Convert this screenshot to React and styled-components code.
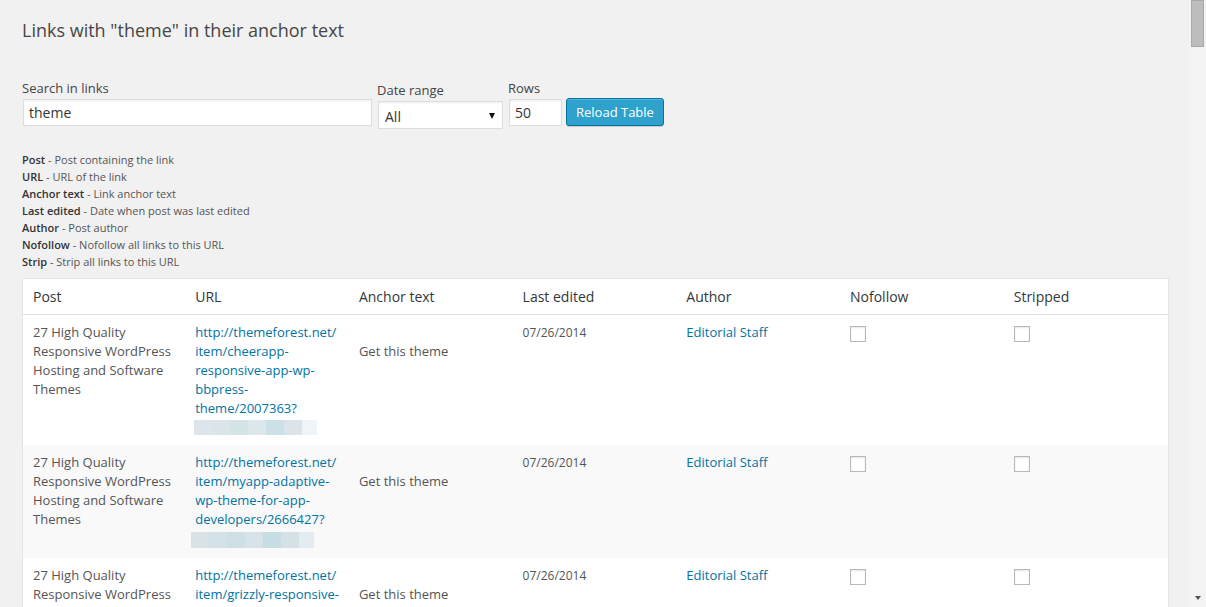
import React from "react";
import styled, { createGlobalStyle } from "styled-components";

const Global = createGlobalStyle`
  html, body { margin: 0; padding: 0; background: #f1f1f1; overflow: hidden; }
  body { font-family: "Open Sans", "Liberation Sans", sans-serif; color: #444; }
  * { box-sizing: border-box; }
`;

const Shell = styled.div`
  display: flex;
  width: 1206px;
  height: 607px;
  overflow: hidden;
`;

const Main = styled.main`
  flex: 1;
  min-width: 0;
  overflow: hidden;
  padding: 18px 20px 0 22px;
`;

const Title = styled.h2`
  margin: 0;
  font-size: 18px;
  line-height: 24px;
  font-weight: 400;
  color: #464646;
`;

const Form = styled.form`
  display: flex;
  align-items: flex-end;
  margin-top: 37px;
  height: 50px;
`;

const Field = styled.div`
  display: flex;
  flex-direction: column;
  margin-right: ${(p) => p.$mr || 0}px;
  margin-bottom: ${(p) => p.$mb || 0}px;
`;

const Label = styled.label`
  font-size: 13px;
  line-height: 18px;
  color: #444;
  margin-bottom: 2px;
`;

const TextInput = styled.input`
  width: ${(p) => p.$w}px;
  height: ${(p) => p.$h}px;
  margin-left: ${(p) => p.$ml || 0}px;
  border: 1px solid #ddd;
  background: #fff;
  box-shadow: inset 0 1px 2px rgba(0, 0, 0, 0.07);
  font-family: "Open Sans", "Liberation Sans", sans-serif;
  font-size: 14px;
  color: #333;
  padding: 0 5px;
  outline: none;
`;

const SelectWrap = styled.div`
  position: relative;
  width: 125px;
  height: 28px;
  margin-left: 1px;
`;

const Select = styled.select`
  appearance: none;
  -webkit-appearance: none;
  width: 100%;
  height: 100%;
  border: 1px solid #ddd;
  background: #fff;
  box-shadow: inset 0 1px 2px rgba(0, 0, 0, 0.07);
  font-family: "Open Sans", "Liberation Sans", sans-serif;
  font-size: 14px;
  color: #333;
  padding: 2px 6px 0;
  outline: none;
  border-radius: 0;
`;

const Arrow = styled.span`
  position: absolute;
  right: 8px;
  top: 12px;
  width: 0;
  height: 0;
  border-left: 3.5px solid transparent;
  border-right: 3.5px solid transparent;
  border-top: 6px solid #111;
  pointer-events: none;
`;

const Button = styled.button`
  height: 28px;
  margin-bottom: 3px;
  padding: 0 9px 1px;
  font-family: "Open Sans", "Liberation Sans", sans-serif;
  font-size: 13px;
  color: #fff;
  background: #2ea2cc;
  border: 1px solid #0074a2;
  border-radius: 3px;
  box-shadow: inset 0 1px 0 rgba(120, 200, 230, 0.5), 0 1px 0 rgba(0, 0, 0, 0.15);
  cursor: pointer;
`;

const Legend = styled.ul`
  list-style: none;
  margin: 22px 0 0;
  padding: 0;
  font-size: 11px;
  line-height: 17px;
  color: #555;
`;

const Term = styled.strong`
  font-weight: 600;
  color: #333;
`;

const Table = styled.table`
  margin-top: 8px;
  width: 1147px;
  border-collapse: collapse;
  table-layout: fixed;
  background: #fff;
  border: 1px solid #e5e5e5;
  box-shadow: 0 1px 1px rgba(0, 0, 0, 0.04);
`;

const Th = styled.th`
  text-align: left;
  font-weight: 400;
  font-size: 14px;
  line-height: 19px;
  color: #32373c;
  padding: 8px 10px 8px ${(p) => (p.$first ? 10 : 9)}px;
  border-bottom: 1px solid #e1e1e1;
`;

const Tr = styled.tr`
  background: ${(p) => (p.$alt ? "#f9f9f9" : "#fff")};
`;

const Td = styled.td`
  vertical-align: top;
  font-size: 13px;
  line-height: 19px;
  color: #555;
  padding: 8px 10px 10px ${(p) => (p.$first ? 10 : 9)}px;
`;

const Line = styled.span`
  display: block;
  white-space: nowrap;
`;

const Link = styled.a`
  color: #0074a2;
  text-decoration: none;
`;

const AnchorText = styled.span`
  display: block;
  margin-top: 19px;
`;

const DateText = styled.span`
  font-size: 12px;
`;

const Blur = styled.span`
  display: flex;
  height: ${(p) => p.$h}px;
  margin-top: ${(p) => p.$mt}px;
  margin-left: ${(p) => p.$ml}px;
`;

const Pixel = styled.span`
  width: ${(p) => p.$w}px;
  height: 100%;
  background: ${(p) => p.$c};
`;

const Check = styled.input.attrs({ type: "checkbox" })`
  appearance: none;
  -webkit-appearance: none;
  width: 16px;
  height: 16px;
  margin: 3px 0 0;
  border: 1px solid #b4b9be;
  background: #fff;
  box-shadow: inset 0 1px 2px rgba(0, 0, 0, 0.1);
  display: block;
`;

const Scrollbar = styled.div`
  width: 17px;
  height: 607px;
  background: #f3f3f3;
  display: flex;
  flex-direction: column;
  align-items: center;
  justify-content: space-between;
  padding-bottom: 7px;
`;

const Thumb = styled.div`
  width: 13px;
  height: 47px;
  background: #bdbdbd;
  border: 1px solid #a9a9a9;
  margin-left: 2px;
  align-self: flex-start;
`;

const DownArrow = styled.div`
  width: 0;
  height: 0;
  border-left: 3.5px solid transparent;
  border-right: 3.5px solid transparent;
  border-top: 4px solid #505050;
`;

const legend = [
  ["Post", "Post containing the link"],
  ["URL", "URL of the link"],
  ["Anchor text", "Link anchor text"],
  ["Last edited", "Date when post was last edited"],
  ["Author", "Post author"],
  ["Nofollow", "Nofollow all links to this URL"],
  ["Strip", "Strip all links to this URL"],
];

const heads = ["Post", "URL", "Anchor text", "Last edited", "Author", "Nofollow", "Stripped"];

const postLines = ["27 High Quality", "Responsive WordPress", "Hosting and Software", "Themes"];

const rows = [
  {
    url: [
      "http://themeforest.net/",
      "item/cheerapp-",
      "responsive-app-wp-",
      "bbpress-",
      "theme/2007363?",
    ],
    blur: {
      h: 15,
      mt: 2,
      ml: -1,
      px: [
        [18, "#dde5ec"],
        [18, "#dae5ea"],
        [18, "#d4e3e8"],
        [18, "#dde8ec"],
        [18, "#cbe0e7"],
        [18, "#dce4eb"],
        [15, "#eef4f8"],
      ],
    },
  },
  {
    url: [
      "http://themeforest.net/",
      "item/myapp-adaptive-",
      "wp-theme-for-app-",
      "developers/2666427?",
    ],
    blur: {
      h: 16,
      mt: 3,
      ml: -4,
      px: [
        [18, "#d8e2e7"],
        [18, "#d3e2e8"],
        [18, "#cfe0e5"],
        [18, "#d6e3e8"],
        [18, "#c6dde4"],
        [18, "#d4e1e7"],
        [15, "#e3edf1"],
      ],
    },
  },
  {
    url: [
      "http://themeforest.net/",
      "item/grizzly-responsive-",
      "wp-theme/1234567?",
    ],
    blur: null,
  },
];

export default function App() {
  return (
    <>
      <Global />
      <Shell>
        <Main>
          <Title>Links with "theme" in their anchor text</Title>
          <Form onSubmit={(e) => e.preventDefault()}>
            <Field $mr={5} $mb={3}>
              <Label>Search in links</Label>
              <TextInput $w={349} $h={27} $ml={1} defaultValue="theme" />
            </Field>
            <Field $mr={5}>
              <Label>Date range</Label>
              <SelectWrap>
                <Select defaultValue="all">
                  <option value="all">All</option>
                </Select>
                <Arrow />
              </SelectWrap>
            </Field>
            <Field $mr={4} $mb={3}>
              <Label>Rows</Label>
              <TextInput $w={53} $h={27} $ml={1} defaultValue="50" />
            </Field>
            <Button type="button">Reload Table</Button>
          </Form>
          <Legend>
            {legend.map(([t, d]) => (
              <li key={t}>
                <Term>{t}</Term> - {d}
              </li>
            ))}
          </Legend>
          <Table>
            <thead>
              <tr>
                {heads.map((h, k) => (
                  <Th key={h} $first={k === 0}>
                    {h}
                  </Th>
                ))}
              </tr>
            </thead>
            <tbody>
              {rows.map((r, i) => (
                <Tr key={i} $alt={i % 2 === 1}>
                  <Td $first>
                    {postLines.map((l) => (
                      <Line key={l}>{l}</Line>
                    ))}
                  </Td>
                  <Td>
                    <Link href="#">
                      {r.url.map((l) => (
                        <Line key={l}>{l}</Line>
                      ))}
                    </Link>
                    {r.blur && (
                      <Blur $h={r.blur.h} $mt={r.blur.mt} $ml={r.blur.ml}>
                        {r.blur.px.map(([w, c], k) => (
                          <Pixel key={k} $w={w} $c={c} />
                        ))}
                      </Blur>
                    )}
                  </Td>
                  <Td>
                    <AnchorText>Get this theme</AnchorText>
                  </Td>
                  <Td>
                    <DateText>07/26/2014</DateText>
                  </Td>
                  <Td>
                    <Link href="#">Editorial Staff</Link>
                  </Td>
                  <Td>
                    <Check />
                  </Td>
                  <Td>
                    <Check />
                  </Td>
                </Tr>
              ))}
            </tbody>
          </Table>
        </Main>
        <Scrollbar>
          <Thumb />
          <DownArrow />
        </Scrollbar>
      </Shell>
    </>
  );
}
